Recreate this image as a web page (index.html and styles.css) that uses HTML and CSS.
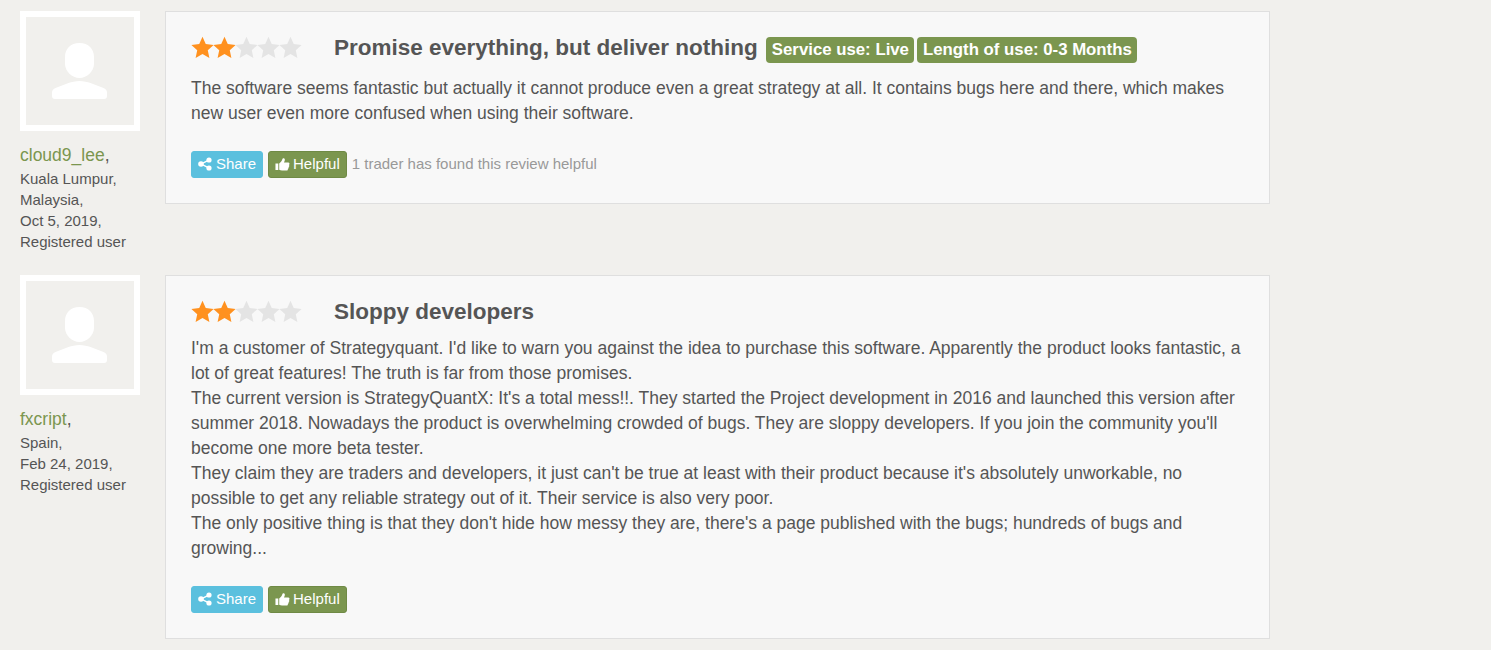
FILE: index.html
```html
<!DOCTYPE html>
<html lang="en">
<head>
    <meta charset="UTF-8">
    <title>Reviews</title>
    <link rel="stylesheet" href="styles.css">
</head>
<body>
    <svg class="sprites" width="0" height="0">
        <symbol id="star" viewBox="0 0 24 24"><path d="M12 .8l3.4 7.6 8.2.9-6.1 5.5 1.7 8.1L12 18.8l-7.2 4.1 1.7-8.1L.4 9.3l8.2-.9z"/></symbol>
        <symbol id="user" viewBox="0 0 108 108"><path d="M53.500 26c-9 0-14.500 6-14.500 14v7c0 7 7 14 14.500 14S68 54 68 47v-7c0-8-5.500-14-14.500-14zM53.500 64c-4 0-8 1-11 2l-13 5c-3 1-3.500 3-3.500 5v3c0 2 1 3 3 3h49c2 0 3-1 3-3v-3c0-2-.5-4-3.500-5l-13-5c-3-1-7-2-11-2z"/></symbol>
        <symbol id="share" viewBox="0 0 14 14"><circle cx="11" cy="3" r="2.6"/><circle cx="11" cy="11" r="2.6"/><circle cx="3" cy="7" r="2.8"/><path d="M3 6.200l8-4 .6 1.400-8 4zM3.600 6.400l8 4-.6 1.400-8-4z"/></symbol>
        <symbol id="thumb" viewBox="0 0 16 14"><path d="M.5 6.500h3v7h-3zM4.500 6.500c1.500-1 3-3 3.500-5 .2-1 2.300-1 2.500.8.100 1.200-.5 2.300-.9 3.200h4.400c1.700 0 1.900 2 .9 2.500.6.800.4 1.800-.4 2.200.3.900 0 1.700-.8 2 .2 1-.4 1.800-1.500 1.800H7.500c-1.200 0-2-.5-3-.8z"/></symbol>
    </svg>

    <div class="review">
        <div class="reviewer">
            <div class="avatar"><svg><use href="#user"/></svg></div>
            <div class="name"><a>cloud9_lee</a>,</div>
            <div class="meta">Kuala Lumpur,</div>
            <div class="meta">Malaysia,</div>
            <div class="meta">Oct 5, 2019,</div>
            <div class="meta">Registered user</div>
        </div>
        <div class="card">
            <div class="card-head">
                <div class="stars">
                    <svg class="on"><use href="#star"/></svg><svg class="on"><use href="#star"/></svg><svg><use href="#star"/></svg><svg><use href="#star"/></svg><svg><use href="#star"/></svg>
                </div>
                <h3>Promise everything, but deliver nothing</h3>
                <span class="label">Service use: Live</span>
                <span class="label">Length of use: 0-3 Months</span>
            </div>
            <p class="text">The software seems fantastic but actually it cannot produce even a great strategy at all. It contains bugs here and there, which makes new user even more confused when using their software.</p>
            <div class="actions">
                <button class="btn btn-share"><svg class="ico-share"><use href="#share"/></svg>Share</button>
                <button class="btn btn-helpful"><svg class="ico-thumb"><use href="#thumb"/></svg>Helpful</button>
                <span class="helpful-count">1 trader has found this review helpful</span>
            </div>
        </div>
    </div>

    <div class="review">
        <div class="reviewer">
            <div class="avatar"><svg><use href="#user"/></svg></div>
            <div class="name"><a>fxcript</a>,</div>
            <div class="meta">Spain,</div>
            <div class="meta">Feb 24, 2019,</div>
            <div class="meta">Registered user</div>
        </div>
        <div class="card">
            <div class="card-head">
                <div class="stars">
                    <svg class="on"><use href="#star"/></svg><svg class="on"><use href="#star"/></svg><svg><use href="#star"/></svg><svg><use href="#star"/></svg><svg><use href="#star"/></svg>
                </div>
                <h3>Sloppy developers</h3>
            </div>
            <p class="text">I'm a customer of Strategyquant. I'd like to warn you against the idea to purchase this software. Apparently the product looks fantastic, a lot of great features! The truth is far from those promises.<br>
            The current version is StrategyQuantX: It's a total mess!!. They started the Project development in 2016 and launched this version after summer 2018. Nowadays the product is overwhelming crowded of bugs. They are sloppy developers. If you join the community you'll become one more beta tester.<br>
            They claim they are traders and developers, it just can't be true at least with their product because it's absolutely unworkable, no possible to get any reliable strategy out of it. Their service is also very poor.<br>
            The only positive thing is that they don't hide how messy they are, there's a page published with the bugs; hundreds of bugs and growing...</p>
            <div class="actions">
                <button class="btn btn-share"><svg class="ico-share"><use href="#share"/></svg>Share</button>
                <button class="btn btn-helpful"><svg class="ico-thumb"><use href="#thumb"/></svg>Helpful</button>
            </div>
        </div>
    </div>
</body>
</html>
```

FILE: styles.css
```css
html {
    overflow: hidden;
}
body {
    margin: 0;
    padding: 11px 221px 0 20px;
    background-color: #f1f0ed;
    color: #555;
    font-family: "Liberation Sans", Arial, sans-serif;
    font-size: 17.5px;
}
.sprites {
    display: block;
    height: 0;
}
.review {
    display: flex;
    align-items: flex-start;
    gap: 25px;
    margin-bottom: 11px;
    min-height: 253px;
}
.reviewer {
    width: 120px;
    flex: none;
}
.avatar {
    width: 120px;
    height: 120px;
    box-sizing: border-box;
    border: 6px solid #fff;
    margin-bottom: 11px;
}
.avatar svg {
    display: block;
    width: 108px;
    height: 108px;
    fill: #fff;
}
.name {
    font-size: 17.5px;
    line-height: 26px;
}
.name a {
    color: #7b964f;
}
.meta {
    font-size: 15px;
    line-height: 21px;
}
.card {
    flex: 1;
    background-color: #f8f8f8;
    border: 1px solid #dfdfdf;
    padding: 19px 25px 25px;
}
.card-head {
    display: flex;
    align-items: flex-start;
    margin-bottom: 8px;
}
.stars {
    display: flex;
    width: 143px;
    flex: none;
    margin-top: 5px;
}
.stars svg {
    width: 23px;
    height: 23px;
    margin-right: -1px;
    fill: #e4e4e4;
}
.stars .on {
    fill: #ff911f;
}
h3 {
    margin: 0 8px 0 0;
    padding-top: 1px;
    font-size: 22.5px;
    line-height: 32px;
    font-weight: bold;
    color: #555;
}
.label {
    background-color: #7b964f;
    color: #fff;
    font-size: 16.8px;
    font-weight: bold;
    line-height: 26px;
    padding: 0 5px 0 6px;
    border-radius: 4px;
    margin: 6px 3px 5px 0;
}
.text {
    margin: 0;
    line-height: 25px;
}
.actions {
    display: flex;
    align-items: center;
    gap: 5px;
    margin-top: 25px;
}
.btn {
    display: flex;
    align-items: center;
    height: 27px;
    padding: 0 6px 2px;
    border: 1px solid;
    border-radius: 3px;
    color: #fff;
    font-family: inherit;
    font-size: 15px;
}
.btn-share {
    background-color: #5bc0de;
    border-color: #5bc0de;
}
.btn-helpful {
    background-color: #7b964f;
    border-color: #6f8a45;
}
.btn svg {
    fill: #fff;
}
.ico-share {
    width: 14px;
    height: 14px;
    margin-top: 1px;
    margin-right: 4px;
}
.ico-thumb {
    width: 15px;
    height: 14px;
    margin-right: 3px;
}
.helpful-count {
    color: #999;
    font-size: 15px;
    margin-bottom: 2px;
}
```
